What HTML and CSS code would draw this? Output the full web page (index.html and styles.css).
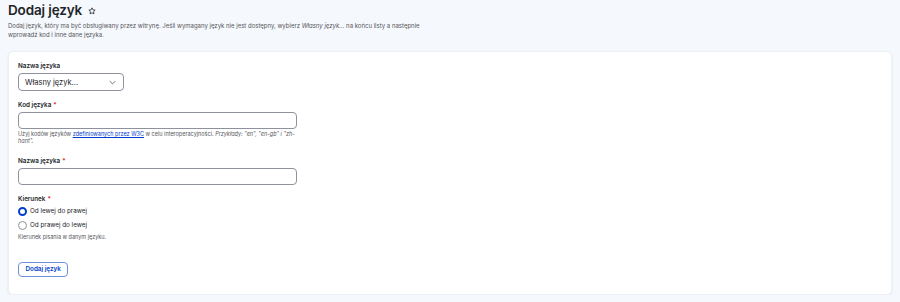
FILE: index.html
```html
<!DOCTYPE html>
<html lang="pl">
<head>
<meta charset="utf-8">
<title>Dodaj język</title>
<link rel="stylesheet" href="styles.css">
</head>
<body>
<div class="page">
  <div class="title-row">
    <h1 class="title">Dodaj język</h1>
    <svg class="star" viewBox="0 0 24 24" width="8" height="8"><path d="M12 2.5l2.9 6.1 6.6.8-4.9 4.6 1.3 6.6L12 17.3l-5.9 3.3 1.3-6.6-4.9-4.6 6.6-.8z" fill="none" stroke="#232429" stroke-width="2.4" stroke-linejoin="round"/></svg>
  </div>
  <p class="intro">Dodaj język, który ma być obsługiwany przez witrynę. Jeśli wymagany język nie jest dostępny, wybierz <em>Własny język...</em> na końcu listy a następnie wprowadź kod i inne dane języka.</p>

  <form class="card">
    <div class="field">
      <label class="label">Nazwa języka</label>
      <div class="select">
        <span>Własny język...</span>
        <svg class="chev" viewBox="0 0 10 6" width="7" height="5"><path d="M1 1l4 4 4-4" fill="none" stroke="#55565b" stroke-width="1.2"/></svg>
      </div>
    </div>

    <div class="field">
      <label class="label">Kod języka<span class="req">*</span></label>
      <div class="input"></div>
      <p class="desc">Użyj kodów języków <a href="#">zdefiniowanych przez W3C</a> w celu interoperacyjności. <em>Przykłady: "en", "en-gb" i "zh-hant".</em></p>
    </div>

    <div class="field">
      <label class="label">Nazwa języka<span class="req">*</span></label>
      <div class="input"></div>
    </div>

    <div class="field">
      <label class="label">Kierunek<span class="req">*</span></label>
      <div class="radios">
        <div class="radio-row"><span class="radio checked"></span><span>Od lewej do prawej</span></div>
        <div class="radio-row"><span class="radio"></span><span>Od prawej do lewej</span></div>
      </div>
      <p class="desc desc-radio">Kierunek pisania w danym języku.</p>
    </div>

    <div class="actions">
      <button type="button" class="btn">Dodaj język</button>
    </div>
  </form>
</div>
</body>
</html>
```

FILE: styles.css
```css
* { box-sizing: border-box; }
html, body { margin: 0; padding: 0; }
body {
  background: #f5f8fc;
  font-family: Inter, "Noto Sans", sans-serif;
  color: #232429;
}
.page {
  padding: 1px 8px 0 8px;
}
.title-row {
  display: flex;
  align-items: center;
  gap: 6px;
  height: 19px;
}
.title {
  margin: 0;
  font-size: 13.5px;
  line-height: 19px;
  font-weight: 600;
  letter-spacing: -0.01em;
  color: #232429;
}
.star { display: block; margin-top: 1px; }
.intro {
  margin: 2px 0 0 0;
  max-width: 425px;
  font-size: 6px;
  line-height: 8.5px;
  color: #55565b;
}
.card {
  margin-top: 12px;
  background: #fff;
  border-radius: 5px;
  box-shadow: 0 1px 3px rgba(0, 20, 70, 0.08);
  border: 1px solid #edf0f5;
  padding: 10px 9px 17px 9px;
  display: flex;
  flex-direction: column;
  gap: 10px;
}
.field {
  display: flex;
  flex-direction: column;
  align-items: flex-start;
}
.label {
  font-size: 6.3px;
  line-height: 8px;
  font-weight: 600;
  margin-bottom: 3px;
  color: #232429;
}
.req {
  color: #dc2323;
  margin-left: 2px;
}
.select {
  width: 106px;
  height: 18px;
  border: 1px solid #8e929c;
  border-radius: 4px;
  display: flex;
  align-items: center;
  justify-content: space-between;
  padding: 0 7px 0 6px;
  font-size: 7.5px;
  color: #232429;
}
.chev { display: block; }
.input {
  width: 279px;
  height: 17px;
  border: 1px solid #8e929c;
  border-radius: 4px;
  background: #fff;
}
.desc {
  margin: 2px 0 1.5px 0;
  max-width: 279px;
  font-size: 5.5px;
  line-height: 7px;
  color: #55565b;
}
.desc-radio {
  margin-top: 4.5px;
}
.desc a {
  color: #003ecc;
  text-decoration: underline;
}
.radios {
  display: flex;
  flex-direction: column;
  gap: 4.5px;
  margin-top: 1.5px;
}
.radio-row {
  display: flex;
  align-items: center;
  gap: 3px;
  height: 9px;
  font-size: 6.3px;
  line-height: 9px;
  color: #232429;
}
.radio {
  width: 9px;
  height: 9px;
  border-radius: 50%;
  border: 1px solid #8e929c;
  background: #fff;
}
.radio.checked {
  border: 2.5px solid #003ecc;
}
.actions {
  padding-top: 9px;
}
.btn {
  display: block;
  font-family: Inter, "Noto Sans", sans-serif;
  font-size: 6.3px;
  font-weight: 600;
  color: #003ecc;
  background: #fff;
  border: 1px solid #6d8fd8;
  border-radius: 4px;
  height: 15px;
  padding: 0 6.5px;
  line-height: 13px;
}
```
